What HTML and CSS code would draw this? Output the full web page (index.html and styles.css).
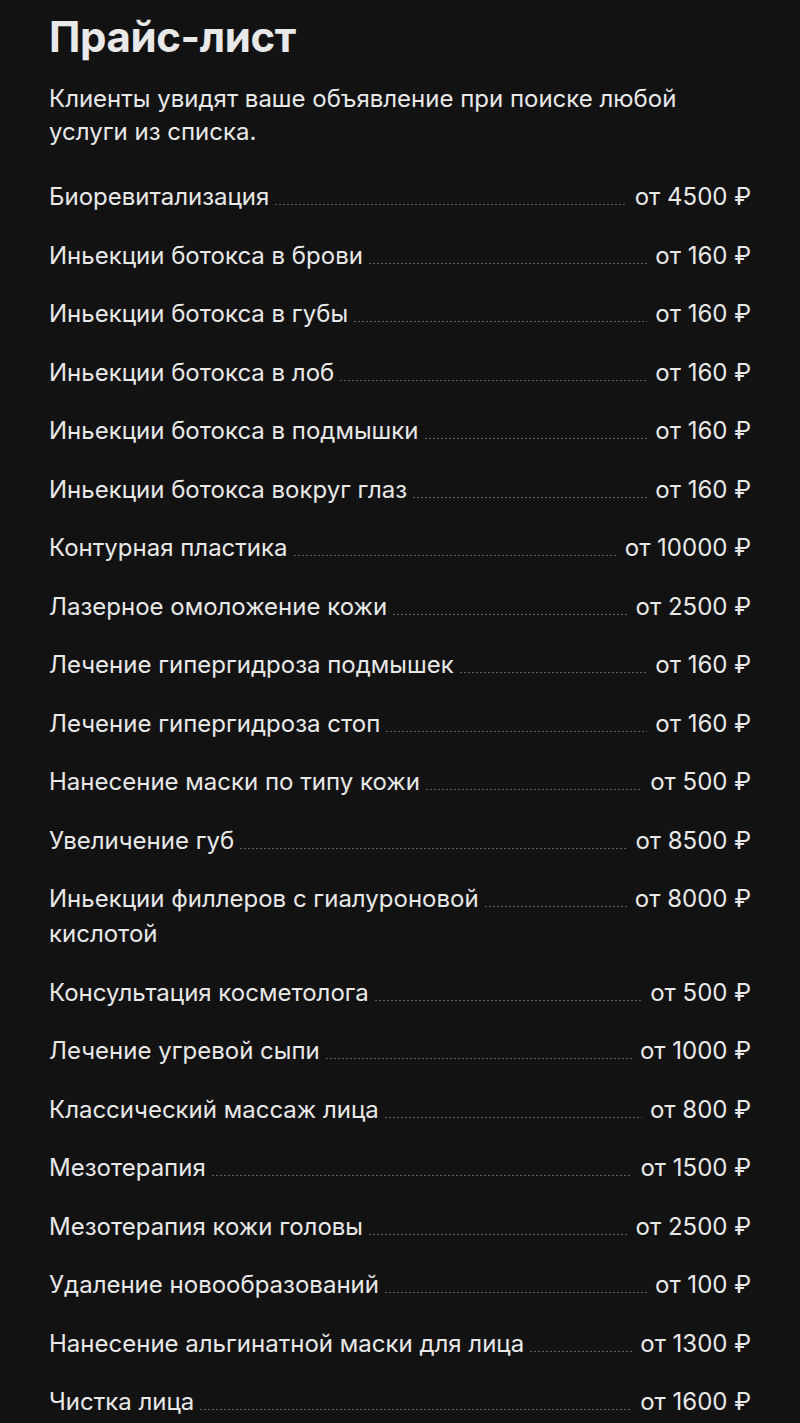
FILE: index.html
```html
<!DOCTYPE html>
<html lang="ru">
<head>
	<meta charset="utf-8">
	<title>Прайс-лист</title>
	<link rel="stylesheet" href="styles.css">
</head>
<body>
	<div class="page">
		<h1 class="title">Прайс-лист</h1>
		<p class="lead">Клиенты увидят ваше объявление при поиске любой услуги из списка.</p>

		<ul class="prices">
			<li class="row"><span class="name">Биоревитализация</span><span class="dots"></span><span class="price">от 4500 ₽</span></li>
			<li class="row"><span class="name">Иньекции ботокса в брови</span><span class="dots"></span><span class="price">от 160 ₽</span></li>
			<li class="row"><span class="name">Иньекции ботокса в губы</span><span class="dots"></span><span class="price">от 160 ₽</span></li>
			<li class="row"><span class="name">Иньекции ботокса в лоб</span><span class="dots"></span><span class="price">от 160 ₽</span></li>
			<li class="row"><span class="name">Иньекции ботокса в подмышки</span><span class="dots"></span><span class="price">от 160 ₽</span></li>
			<li class="row"><span class="name">Иньекции ботокса вокруг глаз</span><span class="dots"></span><span class="price">от 160 ₽</span></li>
			<li class="row"><span class="name">Контурная пластика</span><span class="dots"></span><span class="price">от 10000 ₽</span></li>
			<li class="row"><span class="name">Лазерное омоложение кожи</span><span class="dots"></span><span class="price">от 2500 ₽</span></li>
			<li class="row"><span class="name">Лечение гипергидроза подмышек</span><span class="dots"></span><span class="price">от 160 ₽</span></li>
			<li class="row"><span class="name">Лечение гипергидроза стоп</span><span class="dots"></span><span class="price">от 160 ₽</span></li>
			<li class="row"><span class="name">Нанесение маски по типу кожи</span><span class="dots"></span><span class="price">от 500 ₽</span></li>
			<li class="row"><span class="name">Увеличение губ</span><span class="dots"></span><span class="price">от 8500 ₽</span></li>
			<li class="row"><span class="name">Иньекции филлеров с гиалуроновой<br>кислотой</span><span class="dots"></span><span class="price">от 8000 ₽</span></li>
			<li class="row"><span class="name">Консультация косметолога</span><span class="dots"></span><span class="price">от 500 ₽</span></li>
			<li class="row"><span class="name">Лечение угревой сыпи</span><span class="dots"></span><span class="price">от 1000 ₽</span></li>
			<li class="row"><span class="name">Классический массаж лица</span><span class="dots"></span><span class="price">от 800 ₽</span></li>
			<li class="row"><span class="name">Мезотерапия</span><span class="dots"></span><span class="price">от 1500 ₽</span></li>
			<li class="row"><span class="name">Мезотерапия кожи головы</span><span class="dots"></span><span class="price">от 2500 ₽</span></li>
			<li class="row"><span class="name">Удаление новообразований</span><span class="dots"></span><span class="price">от 100 ₽</span></li>
			<li class="row"><span class="name">Нанесение альгинатной маски для лица</span><span class="dots"></span><span class="price">от 1300 ₽</span></li>
			<li class="row"><span class="name">Чистка лица</span><span class="dots"></span><span class="price">от 1600 ₽</span></li>
		</ul>
	</div>
</body>
</html>
```

FILE: styles.css
```css
html, body {
	margin: 0;
	background: #121212;
}

body {
	font-family: Inter, "Noto Sans", sans-serif;
	color: #e9e9e9;
}

.page {
	padding: 12px 49px 0;
}

.title {
	margin: 0;
	font-size: 42px;
	font-weight: 700;
	line-height: 50px;
	letter-spacing: -0.4px;
}

.lead {
	margin: 20px 0 0;
	max-width: 650px;
	font-size: 24px;
	line-height: 33px;
}

.prices {
	list-style: none;
	margin: 31px 0 0;
	padding: 0;
	display: flex;
	flex-direction: column;
	gap: 23.5px;
}

.row {
	display: flex;
	align-items: flex-start;
	font-size: 24px;
	line-height: 35px;
}

.name {
	flex: 0 1 auto;
}

.dots {
	flex: 1 1 auto;
	min-width: 20px;
	height: 27px;
	margin: 0 8px 0 5px;
	background-image: radial-gradient(circle, #5e5e5e 0.7px, transparent 0.9px);
	background-size: 4px 3px;
	background-repeat: repeat-x;
	background-position: 0 100%;
}

.price {
	flex: none;
	white-space: nowrap;
}
```
